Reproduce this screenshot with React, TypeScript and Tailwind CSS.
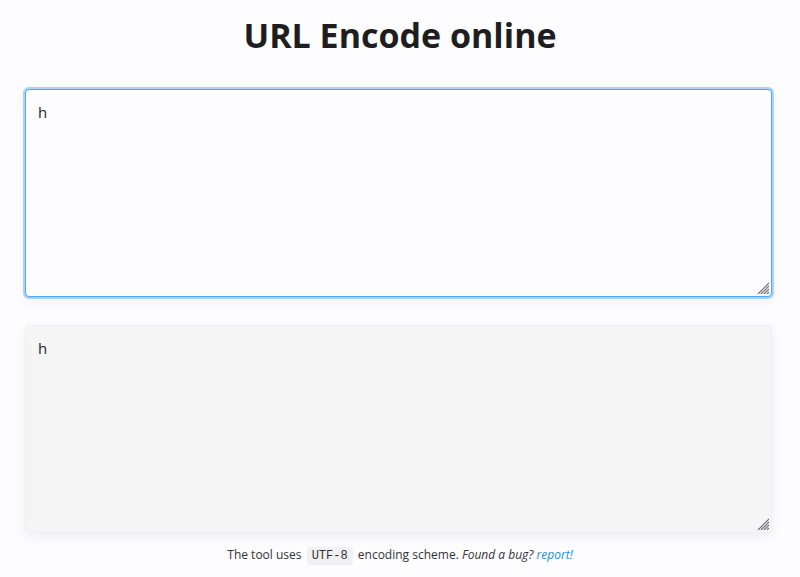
import React from 'react';

function Grip() {
  return (
    <svg
      className="pointer-events-none absolute bottom-[3px] right-[3px]"
      width="12"
      height="12"
      viewBox="0 0 12 12"
    >
      <g stroke="#6b6b70" strokeWidth="1.2">
        <line x1="12" y1="1" x2="1" y2="12" />
        <line x1="12" y1="4" x2="4" y2="12" />
        <line x1="12" y1="7" x2="7" y2="12" />
        <line x1="12" y1="10" x2="10" y2="12" />
      </g>
    </svg>
  );
}

export default function App() {
  return (
    <div
      className="min-h-[577px] w-full bg-[#fdfcfe] text-[#1f1f22]"
      style={{ fontFamily: '"Open Sans", "Noto Sans", sans-serif' }}
    >
      <h1 className="pt-[12px] text-center text-[34px] font-bold leading-[46px] text-[#1e1e21]">
        URL Encode online
      </h1>
      <div className="mx-[25px] mt-[31px] flex w-[747px] flex-col gap-[28px]">
        <div className="relative h-[208px]">
          <textarea
            defaultValue="h"
            className="block h-full w-full resize-none rounded-[4px] border border-[#4ea8f2] bg-[#fdfcfe] px-[12px] py-[10px] text-[15px] leading-[24px] text-[#1f1f22] shadow-[0_0_0_2px_rgba(120,185,245,0.6),0_4px_14px_rgba(0,0,0,0.06)] outline-none"
            style={{ fontFamily: '"Open Sans", sans-serif' }}
          />
          <Grip />
        </div>
        <div className="relative h-[208px]">
          <textarea
            defaultValue="h"
            readOnly
            className="block h-full w-full resize-none rounded-[4px] border border-[#efeef1] bg-[#f5f5f6] px-[12px] py-[10px] text-[15px] leading-[24px] text-[#1f1f22] shadow-[0_4px_14px_rgba(0,0,0,0.06)] outline-none"
            style={{ fontFamily: '"Open Sans", sans-serif' }}
          />
          <Grip />
        </div>
      </div>
      <p className="mt-[12px] text-center text-[12px] leading-[20px] text-[#333336]">
        The tool uses{' '}
        <code
          className="mx-[2px] rounded-[3px] bg-[#f1f1f3] px-[5px] py-[2px] text-[12px] text-[#333]"
          style={{ fontFamily: '"Liberation Mono", monospace' }}
        >
          UTF-8
        </code>{' '}
        encoding scheme.{' '}
        <em>Found a bug?</em>{' '}
        <a className="italic text-[#1a8ee0]" href="#">
          report!
        </a>
      </p>
    </div>
  );
}
